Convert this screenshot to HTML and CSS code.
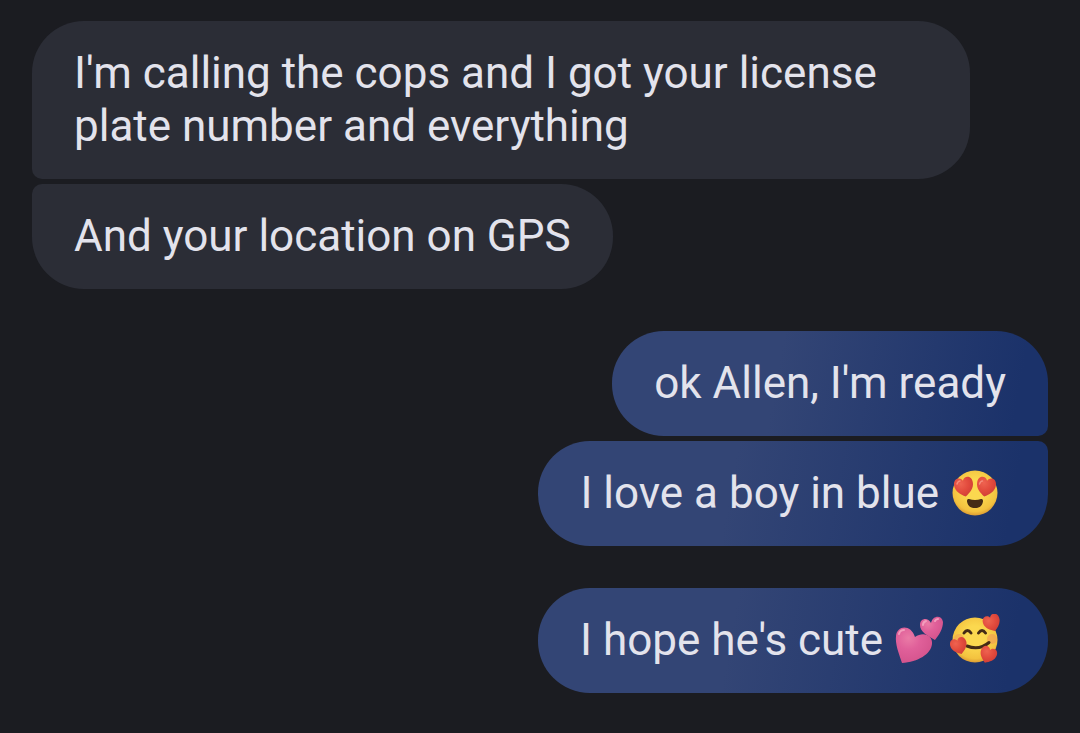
FILE: index.html
```html
<!DOCTYPE html>
<html lang="en">
<head>
<meta charset="utf-8">
<meta name="viewport" content="width=device-width, initial-scale=1">
<title>Conversation</title>
<link rel="stylesheet" href="styles.css">
</head>
<body>
<svg class="defs" aria-hidden="true">
  <defs>
    <radialGradient id="face" cx=".5" cy=".42" r=".58"><stop offset=".4" stop-color="#fbd84f"/><stop offset=".85" stop-color="#f3c23f"/><stop offset="1" stop-color="#dc9c33"/></radialGradient>
    <radialGradient id="red" cx=".35" cy=".3" r=".8"><stop offset="0" stop-color="#ee6350"/><stop offset=".5" stop-color="#e24b3d"/><stop offset="1" stop-color="#cc3a35"/></radialGradient>
    <radialGradient id="pink" cx=".35" cy=".3" r=".8"><stop offset="0" stop-color="#ea7ba6"/><stop offset=".4" stop-color="#e0609a"/><stop offset="1" stop-color="#d2518a"/></radialGradient>
    <path id="heart" d="M0 10C-5 7-10 3-10-3C-10-11-2-11.500 0-6.500C2-11.500 10-11 10-3C10 3 5 7 0 10Z"/>
  </defs>
</svg>
<main class="thread">
  <section class="group incoming">
    <p class="bubble">I'm calling the cops and I got your license plate number and everything</p>
    <p class="bubble">And your location on GPS</p>
  </section>
  <section class="group outgoing">
    <p class="bubble">ok Allen, I'm ready</p>
    <p class="bubble">I love a boy in blue <svg class="emoji" viewBox="0 0 56 53" role="img" aria-label="Smiling face with heart eyes">
      <circle cx="25" cy="26" r="22.5" fill="url(#face)"/>
      <use href="#heart" transform="translate(14 20) rotate(-10) scale(.95 .97)" fill="url(#red)"/>
      <use href="#heart" transform="translate(36 20) rotate(10) scale(.95 .97)" fill="url(#red)"/>
      <path d="M7 17q1-3 3-3M29.500 17q1-3 3-3" fill="none" stroke="#f58d7c" stroke-width="1.500" stroke-linecap="round"/>
      <path d="M19 32Q25 34 31 32Q33.500 31.500 33 34.500C32 39.500 29 41 25 41S18 39.500 17 34.500Q16.500 31.500 19 32Z" fill="#442b16"/>
    </svg></p>
  </section>
  <section class="group outgoing">
    <p class="bubble">I hope he's cute <svg class="emoji" viewBox="0 0 56 53" role="img" aria-label="Two hearts">
      <path d="M8 49C5 40 1 30 2 22C3 11 17 10 21 23C29 17 39 21 38 30C37 40 24 48 8 49Z" fill="url(#pink)"/>
      <path d="M41 26C34 22 26 18 26 11C26 4 34 3 37 9C39 1 48 1 49 8C49 15 45 21 41 26Z" fill="url(#pink)"/>
      <path d="M5 20q1-4 5-4M29 11q0-3 3-4M41 7q1-2 3-2" fill="none" stroke="#f29dbc" stroke-width="2" stroke-linecap="round"/>
    </svg><svg class="emoji" viewBox="0 0 56 53" role="img" aria-label="Smiling face with hearts">
      <circle cx="25" cy="26" r="22.500" fill="url(#face)"/>
      <circle cx="9" cy="25" r="5" fill="#f09a55" opacity=".5"/>
      <circle cx="42" cy="25" r="5" fill="#f09a55" opacity=".6"/>
      <path d="M14 19Q17.500 14 21 19M28.500 19Q32 14 35.500 19" fill="none" stroke="#442b16" stroke-width="3" stroke-linecap="round"/>
      <path d="M17 32Q29 37 39 28.500" fill="none" stroke="#442b16" stroke-width="3" stroke-linecap="round"/>
      <use href="#heart" transform="translate(42 9) rotate(-20) scale(.85)" fill="url(#red)"/>
      <use href="#heart" transform="translate(9 32) rotate(-18) scale(.83)" fill="url(#red)"/>
      <use href="#heart" transform="translate(38 41) rotate(22) scale(.83)" fill="url(#red)"/>
    </svg></p>
  </section>
</main>
</body>
</html>
```
FILE: styles.css
```css
* {
  box-sizing: border-box;
}

body {
  margin: 0;
  min-height: 100vh;
  background: #1b1c21;
  color: #e3e3ec;
  font-family: Roboto, "Noto Sans", sans-serif;
  font-size: 44px;
  line-height: 53px;
}

.defs {
  position: absolute;
  width: 0;
  height: 0;
}

.thread {
  display: flex;
  flex-direction: column;
  gap: 42px;
  padding: 21px 32px 40px;
}

.group {
  display: flex;
  flex-direction: column;
  gap: 5px;
}

.bubble {
  margin: 0;
  max-width: 938px;
  padding: 26px 42px;
  border-radius: 52px;
}

.incoming {
  align-items: flex-start;
}

.incoming .bubble {
  background: #2b2d36;
}

.incoming .bubble:not(:last-child) {
  border-bottom-left-radius: 10px;
}

.incoming .bubble:not(:first-child) {
  border-top-left-radius: 10px;
}

.outgoing {
  align-items: flex-end;
}

.outgoing .bubble {
  background: linear-gradient(100deg, #334575 38%, #1b326a 92%);
}

.outgoing .bubble:not(:last-child) {
  border-bottom-right-radius: 10px;
}

.outgoing .bubble:not(:first-child) {
  border-top-right-radius: 10px;
}

.emoji {
  width: 56px;
  height: 53px;
  vertical-align: top;
}
```
